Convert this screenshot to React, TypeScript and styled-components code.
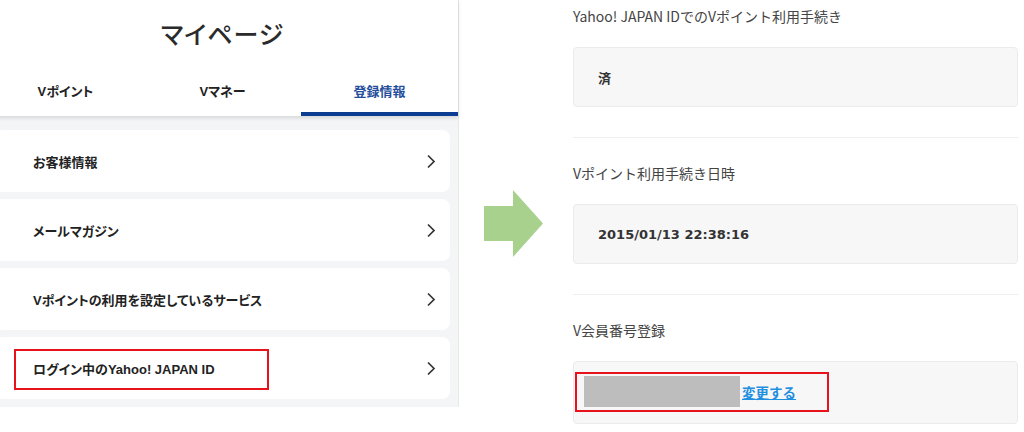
import React from 'react';
import styled, {createGlobalStyle} from 'styled-components';

const GlobalStyle = createGlobalStyle`
  * {
    box-sizing: border-box;
  }
  body {
    margin: 0;
    background: #ffffff;
    overflow: hidden;
    font-family: 'Liberation Sans', 'Noto Sans CJK JP', sans-serif;
  }
`;

const jp = `'Liberation Sans', 'Noto Sans CJK JP', sans-serif`;

const Page = styled.div`
  display: flex;
  width: 1024px;
  height: 432px;
  overflow: hidden;
`;

const LeftPanel = styled.div`
  width: 472px;
  margin-left: -13px;
  flex-shrink: 0;
  align-self: flex-start;
  border-right: 1px solid #e4ebe0;
  display: flex;
  flex-direction: column;
  font-feature-settings: 'palt';
`;

const Header = styled.div`
  background: #ffffff;
  box-shadow: 0 2px 4px rgba(0, 0, 0, 0.13);
  position: relative;
  z-index: 1;
`;

const Title = styled.h1`
  margin: 0;
  height: 65px;
  display: flex;
  align-items: center;
  justify-content: center;
  font-family: ${jp};
  font-weight: 500;
  font-size: 25px;
  letter-spacing: 1px;
  color: #2b2b2b;
`;

const Tabs = styled.div`
  display: grid;
  grid-template-columns: repeat(3, 1fr);
  height: 51px;
  padding-top: 3px;
`;

const Tab = styled.div<{active?: boolean}>`
  display: flex;
  align-items: center;
  justify-content: center;
  font-family: ${jp};
  font-weight: 700;
  font-size: 13px;
  color: ${({active}) => (active ? '#244e9b' : '#222222')};
  border-bottom: 4px solid ${({active}) => (active ? '#0d3d93' : 'transparent')};
`;

const MenuArea = styled.div`
  background: #f4f5f6;
  padding: 14px 8px 8px;
  display: flex;
  flex-direction: column;
  gap: 7px;
`;

const MenuCard = styled.div`
  position: relative;
  height: 62px;
  background: #ffffff;
  border-radius: 8px;
  display: flex;
  align-items: center;
  justify-content: space-between;
  padding: 0 14px 0 38px;
  font-family: ${jp};
  font-weight: 700;
  font-size: 13px;
  color: #222222;
`;

const MarkBox = styled.div`
  position: absolute;
  left: 19px;
  top: 12px;
  width: 255px;
  height: 41px;
  border: 2px solid #e8121c;
  pointer-events: none;
`;

const ArrowColumn = styled.div`
  width: 114px;
  flex-shrink: 0;
  padding: 190px 0 0 25px;
`;

const RightPanel = styled.div`
  flex: 1;
  margin: -19px 6px 0 0;
`;

const Section = styled.section`
  padding: 25px 0 30px;
  border-bottom: 1px solid #eeeeee;

  &:last-child {
    border-bottom: none;
  }
`;

const Label = styled.div`
  line-height: 20px;
  margin-bottom: 21px;
  font-family: 'Noto Sans CJK JP', sans-serif;
  font-size: 14px;
  color: #444444;
`;

const ValueBox = styled.div<{tall?: boolean}>`
  min-height: 60px;
  background: #f7f7f7;
  border: 1px solid #ebebeb;
  border-radius: 4px;
  display: flex;
  align-items: center;
  padding: ${({tall}) => (tall ? '10px 0 11px 1px' : '0 0 0 24px')};
  font-family: 'DejaVu Sans', 'Noto Sans CJK JP', sans-serif;
  font-weight: 700;
  font-size: 13px;
  color: #333333;
`;

const Highlight = styled.div`
  display: inline-flex;
  align-items: center;
  gap: 2px;
  border: 2px solid #e8121c;
  padding: 2px 31px 3px 7px;
`;

const Masked = styled.div`
  width: 156px;
  height: 31px;
  background: #bdbdbd;
`;

const ChangeLink = styled.a`
  font-family: 'Noto Sans CJK JP', sans-serif;
  font-weight: 700;
  font-size: 13.5px;
  color: #1f8fe0;
  text-decoration: underline;
  cursor: pointer;
`;

const Chevron = () => (
  <svg width="10" height="15" viewBox="0 0 10 15">
    <polyline points="2,1.5 8,7.5 2,13.5" fill="none" stroke="#333" strokeWidth="1.7" />
  </svg>
);

const GreenArrow = () => (
  <svg width="60" height="67" viewBox="0 0 60 67">
    <polygon points="0,16 29,16 29,0 59,33.5 29,67 29,51 0,51" fill="#a9d18e" />
  </svg>
);

const menuItems = [
  'お客様情報',
  'メールマガジン',
  'Vポイントの利用を設定しているサービス',
  'ログイン中のYahoo! JAPAN ID',
];

export default function App() {
  return (
    <Page>
      <GlobalStyle />
      <LeftPanel>
        <Header>
          <Title>マイページ</Title>
          <Tabs>
            <Tab>Vポイント</Tab>
            <Tab>Vマネー</Tab>
            <Tab active>登録情報</Tab>
          </Tabs>
        </Header>
        <MenuArea>
          {menuItems.map((item, i) => (
            <MenuCard key={item}>
              <span>{item}</span>
              <Chevron />
              {i === menuItems.length - 1 && <MarkBox />}
            </MenuCard>
          ))}
        </MenuArea>
      </LeftPanel>
      <ArrowColumn>
        <GreenArrow />
      </ArrowColumn>
      <RightPanel>
        <Section>
          <Label>Yahoo! JAPAN IDでのVポイント利用手続き</Label>
          <ValueBox>済</ValueBox>
        </Section>
        <Section>
          <Label>Vポイント利用手続き日時</Label>
          <ValueBox>2015/01/13 22:38:16</ValueBox>
        </Section>
        <Section>
          <Label>V会員番号登録</Label>
          <ValueBox tall>
            <Highlight>
              <Masked />
              <ChangeLink>変更する</ChangeLink>
            </Highlight>
          </ValueBox>
        </Section>
      </RightPanel>
    </Page>
  );
}
